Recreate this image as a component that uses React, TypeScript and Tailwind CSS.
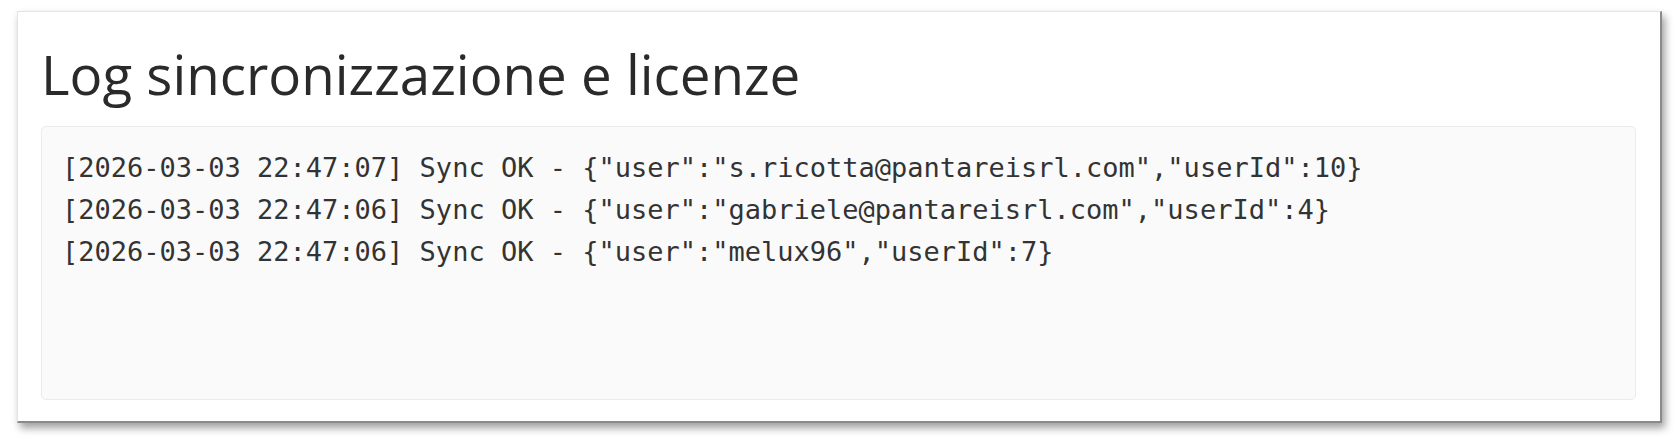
const logLines = [
  '[2026-03-03 22:47:07] Sync OK - {"user":"s.ricotta@pantareisrl.com","userId":10}',
  '[2026-03-03 22:47:06] Sync OK - {"user":"gabriele@pantareisrl.com","userId":4}',
  '[2026-03-03 22:47:06] Sync OK - {"user":"melux96","userId":7}',
]

export default function App() {
  return (
    <div className="w-[1680px] h-[447px] bg-white pt-[11px] pl-[17px]">
      {/* Card */}
      <div className="w-[1645px] h-[412px] bg-white border-l border-t border-[#e4e4e4] border-r-2 border-b-2 border-r-[#8a8a8a] border-b-[#8a8a8a] shadow-[3px_5px_8px_rgba(0,0,0,0.38)] pl-[23px] pr-[24px] pt-[22px]">
        <h1 className="text-[54.7px] leading-[80px] text-[#2a2a2a] font-['Open_Sans',sans-serif] font-normal">
          Log sincronizzazione e licenze
        </h1>

        {/* Log box */}
        <div className="mt-[12px] h-[274px] bg-[#fafafa] border border-[#ebebeb] rounded-[5px] pl-[20px] pt-[20px]">
          {logLines.map((line, i) => (
            <div
              key={i}
              className="font-['DejaVu_Sans_Mono','Liberation_Mono',monospace] text-[27px] leading-[42px] text-[#333] whitespace-pre"
            >
              {line}
            </div>
          ))}
        </div>
      </div>
    </div>
  )
}
